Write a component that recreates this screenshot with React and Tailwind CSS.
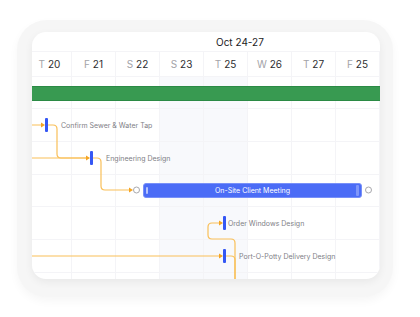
import React from 'react';

const days = [
  { d: 'T', n: '20' },
  { d: 'F', n: '21' },
  { d: 'S', n: '22' },
  { d: 'S', n: '23' },
  { d: 'T', n: '25' },
  { d: 'W', n: '26' },
  { d: 'T', n: '27' },
  { d: 'F', n: '25' },
];

const ORANGE = '#f9bf58';
const ARROW = '#f5a524';

const Arrow = ({ x, y }) => (
  <polygon points={`${x - 4},${y - 2.5} ${x},${y} ${x - 4},${y + 2.5}`} fill={ARROW} />
);

const Marker = ({ className }) => (
  <div className={`absolute w-[3px] h-[14px] rounded-[1px] bg-[#3557f4] ${className}`} />
);

const Label = ({ className, children }) => (
  <div className={`absolute text-[7px] leading-none text-[#808086] whitespace-nowrap -translate-y-1/2 ${className}`}>
    {children}
  </div>
);

export default function App() {
  return (
    <div className="w-[420px] h-[317px] bg-white overflow-hidden" style={{ fontFamily: 'Inter, "Noto Sans", sans-serif' }}>
      <div className="ml-[17px] mt-[20px] w-[376px] h-[277px] rounded-[30px] bg-[#f6f6f6] pt-[12px] pl-[15px] pr-[13px] pb-[18px] shadow-[0_4px_10px_rgba(0,0,0,0.04)]">
        <div className="w-[348px] h-[247px] rounded-[14px] bg-white overflow-hidden shadow-[0_3px_8px_rgba(0,0,0,0.06)] flex flex-col">
          {/* month header */}
          <div className="h-[20px] shrink-0 flex items-center pl-[184px] border-b border-[#f4f4f7]">
            <span className="text-[10px] text-[#1c1c1e] leading-none">Oct 24-27</span>
          </div>

          {/* day row */}
          <div className="h-[25px] shrink-0 flex -ml-[4px] border-b border-[#f4f4f7]">
            {days.map((day, i) => (
              <div key={i} className="w-[44px] shrink-0 flex items-center justify-center border-r border-[#f4f4f7] text-[10px] leading-none">
                <span className="text-[#a3a3a8] mr-[3px]">{day.d}</span>
                <span className="text-[#2e2e30]">{day.n}</span>
              </div>
            ))}
          </div>

          {/* body */}
          <div className="relative flex-1">
            <div className="absolute inset-0 -left-[4px] flex">
              {days.map((_, i) => (
                <div
                  key={i}
                  className={`w-[44px] shrink-0 border-r border-[#f4f4f7] ${i === 3 || i === 4 ? 'bg-[#f8f9fc]' : ''}`}
                />
              ))}
            </div>

            <div className="relative flex flex-col">
              <div className="h-[32px] border-b border-[#f4f4f7] pt-[9px]">
                <div className="h-[15px] bg-[#389a51] border-y border-[#2b8a45]" />
              </div>
              <div className="h-[33px] border-b border-[#f4f4f7]" />
              <div className="h-[33px] border-b border-[#f4f4f7]" />
              <div className="h-[32px] border-b border-[#f4f4f7]" />
              <div className="h-[33px] border-b border-[#f4f4f7]" />
              <div className="h-[33px] border-b border-[#f4f4f7]" />
            </div>

            <svg className="absolute inset-0" width="348" height="202" viewBox="0 0 348 202" fill="none">
              <g stroke={ORANGE} strokeWidth="1.2" strokeLinecap="round">
                <path d="M0 48 H11" />
                <path d="M16 48 H21 Q25 48 25 52 V77 Q25 81 29 81 H56" />
                <path d="M0 81 H56" />
                <path d="M61 81 H65 Q69 81 69 85 V109 Q69 113 73 113 H99" />
                <path d="M203 203 V166 Q203 162 199 162 H180 Q176 162 176 158 V150 Q176 146 180 146 H189" />
                <path d="M0 179 H189" />
                <path d="M194 179 H199 Q203 179 203 183 V203" />
              </g>
              <Arrow x={13} y={48} />
              <Arrow x={58} y={81} />
              <Arrow x={101} y={113} />
              <Arrow x={191} y={146} />
              <Arrow x={191} y={179} />
              <circle cx="104.5" cy="113" r="3" fill="white" stroke="#a8a8ad" strokeWidth="1" />
              <circle cx="336.5" cy="113" r="3" fill="white" stroke="#a8a8ad" strokeWidth="1" />
            </svg>

            <Marker className="left-[13px] top-[41px]" />
            <Marker className="left-[58px] top-[74px]" />
            <Marker className="left-[191px] top-[139px]" />
            <Marker className="left-[191px] top-[172px]" />

            <Label className="left-[29px] top-[48px]">Confirm Sewer &amp; Water Tap</Label>
            <Label className="left-[74px] top-[81px]">Engineering Design</Label>
            <Label className="left-[196px] top-[146px]">Order Windows Design</Label>
            <Label className="left-[207px] top-[179px]">Port-O-Potty Delivery Design</Label>

            <div className="absolute left-[111px] top-[106px] w-[219px] h-[15px] rounded-[3px] bg-[#4b6cf6] border border-[#7890f8] flex items-center justify-center">
              <div className="absolute left-[2px] top-[3px] w-[1.5px] h-[7px] rounded-full bg-white/60" />
              <div className="absolute right-[2px] top-[1px] w-[3px] h-[11px] rounded-[1px] bg-[#7f96f9]" />
              <span className="text-[7px] leading-none text-white">On-Site Client Meeting</span>
            </div>
          </div>
        </div>
      </div>
    </div>
  );
}
